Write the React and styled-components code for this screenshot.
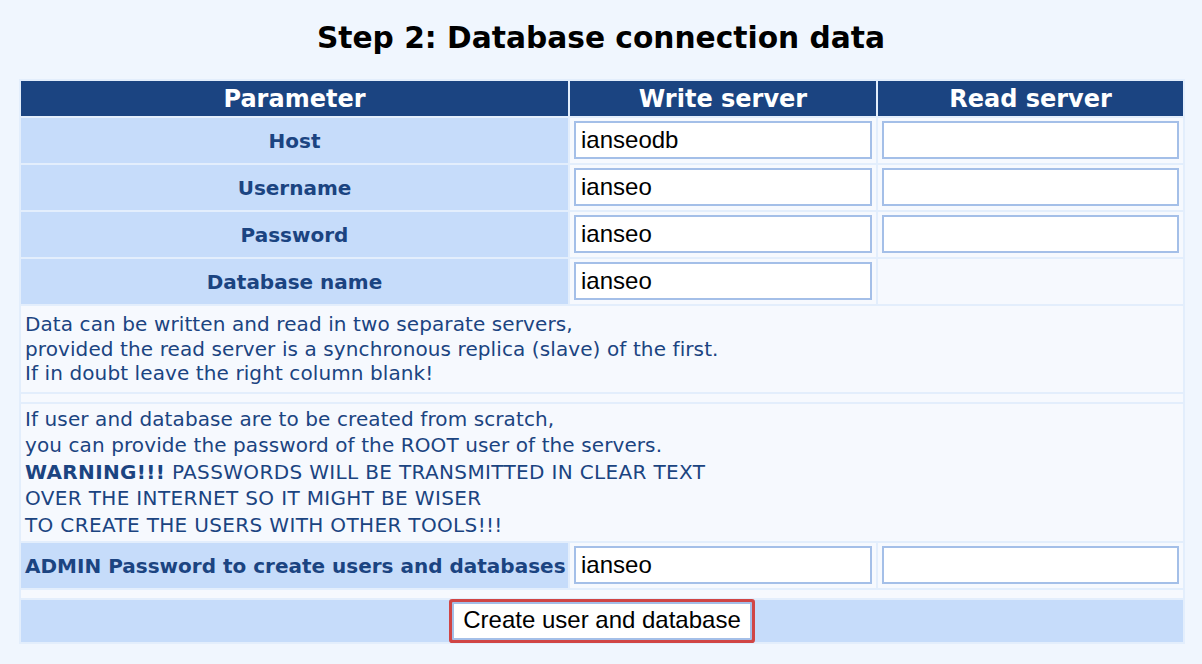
import styled, { createGlobalStyle } from "styled-components";

const GlobalStyle = createGlobalStyle`
  html, body {
    margin: 0;
    padding: 0;
    background: #f0f6fe;
    font-family: "DejaVu Sans", Verdana, sans-serif;
  }
`;

const Page = styled.div`
  width: 1202px;
  min-height: 664px;
  padding-top: 20px;
  box-sizing: border-box;
`;

const Title = styled.h2`
  margin: 0 0 23px;
  font-size: 29.7px;
  line-height: 36px;
  font-weight: bold;
  text-align: center;
  color: #000;
`;

const Table = styled.table`
  width: 1166px;
  margin: 0 0 0 19px;
  border-spacing: 2px;
  background: #e3eefc;
  table-layout: fixed;
`;

const HeadCell = styled.th`
  background: #1b4481;
  color: #fff;
  font-size: 24px;
  line-height: 29px;
  font-weight: bold;
  padding: 4px 4px 2px;
  text-align: center;
`;

const Label = styled.th`
  background: #c6dcfa;
  color: #1b4481;
  font-size: 20px;
  font-weight: bold;
  text-align: center;
  white-space: nowrap;
  padding: 0 4px;
  height: 45px;
`;

const FieldCell = styled.td`
  background: #f6f9fe;
  padding: 3px 4px 4px;
  height: 38px;
`;

const Field = styled.input`
  display: block;
  width: 100%;
  height: 38px;
  box-sizing: border-box;
  border: 2px solid #a4bfe8;
  background: #fff;
  padding: 0 5px;
  font-family: "Liberation Sans", Arial, sans-serif;
  font-size: 24px;
  color: #000;
  outline: none;
`;

const Note = styled.td`
  background: #f6f9fe;
  color: #1b4481;
  font-size: 20px;
  letter-spacing: 0.1px;
  line-height: ${(p) => p.$lh || 24.5}px;
  padding: ${(p) => p.$pad || "6px 4px"};
`;

const Caps = styled.span`
  letter-spacing: 0.35px;
`;

const Spacer = styled.td`
  background: #f6f9fe;
  height: 8px;
  padding: 0;
`;

const ActionCell = styled.td`
  background: #c6dcfa;
  text-align: center;
  padding: 2px 0;
`;

const Button = styled.button`
  width: 300px;
  height: 38px;
  border: 2px solid #a4bfe8;
  background: #fff;
  border-radius: 1px;
  box-shadow: 0 0 0 3px #d04545;
  font-family: "Liberation Sans", Arial, sans-serif;
  font-size: 24px;
  line-height: 30px;
  color: #000;
  padding: 0 0 2px;
  vertical-align: middle;
`;

const rows = [
  { label: "Host", write: "ianseodb", read: "" },
  { label: "Username", write: "ianseo", read: "" },
  { label: "Password", write: "ianseo", read: "" },
  { label: "Database name", write: "ianseo", read: null },
];

export default function App() {
  return (
    <Page>
      <GlobalStyle />
      <Title>Step 2: Database connection data</Title>
      <Table>
        <colgroup>
          <col style={{ width: 547 }} />
          <col style={{ width: 306 }} />
          <col style={{ width: 305 }} />
        </colgroup>
        <thead>
          <tr>
            <HeadCell>Parameter</HeadCell>
            <HeadCell>Write server</HeadCell>
            <HeadCell>Read server</HeadCell>
          </tr>
        </thead>
        <tbody>
          {rows.map((r) => (
            <tr key={r.label}>
              <Label>{r.label}</Label>
              <FieldCell>
                <Field defaultValue={r.write} />
              </FieldCell>
              <FieldCell>{r.read !== null && <Field defaultValue={r.read} />}</FieldCell>
            </tr>
          ))}
          <tr>
            <Note colSpan={3}>
              Data can be written and read in two separate servers,
              <br />
              provided the read server is a synchronous replica (slave) of the first.
              <br />
              If in doubt leave the right column blank!
            </Note>
          </tr>
          <tr>
            <Spacer colSpan={3} />
          </tr>
          <tr>
            <Note colSpan={3} $lh={26.5} $pad="2px 4px 3px">
              If user and database are to be created from scratch,
              <br />
              you can provide the password of the ROOT user of the servers.
              <br />
              <Caps>
                <b>WARNING!!!</b> PASSWORDS WILL BE TRANSMITTED IN CLEAR TEXT
                <br />
                OVER THE INTERNET SO IT MIGHT BE WISER
                <br />
                TO CREATE THE USERS WITH OTHER TOOLS!!!
              </Caps>
            </Note>
          </tr>
          <tr>
            <Label>ADMIN Password to create users and databases</Label>
            <FieldCell>
              <Field defaultValue="ianseo" />
            </FieldCell>
            <FieldCell>
              <Field defaultValue="" />
            </FieldCell>
          </tr>
          <tr>
            <Spacer colSpan={3} />
          </tr>
          <tr>
            <ActionCell colSpan={3}>
              <Button>Create user and database</Button>
            </ActionCell>
          </tr>
        </tbody>
      </Table>
    </Page>
  );
}
